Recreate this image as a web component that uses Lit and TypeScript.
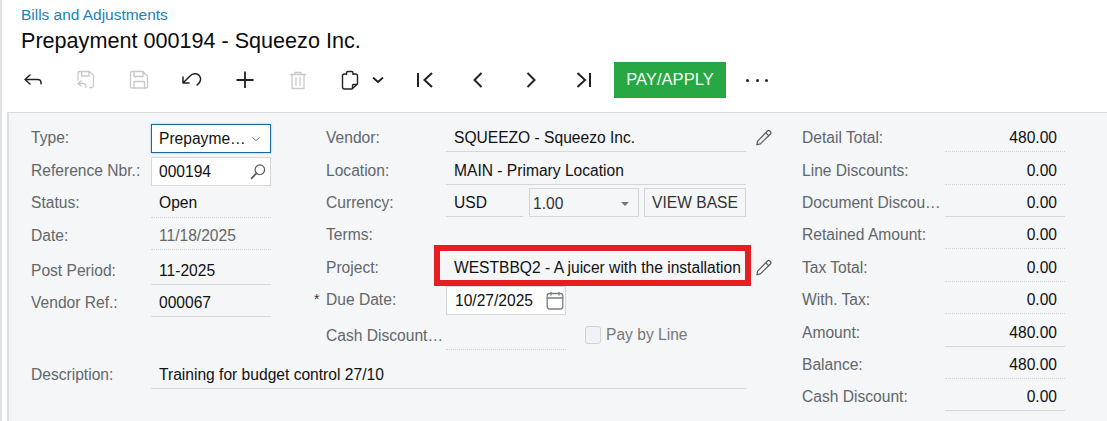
import { LitElement, html, css, svg } from "lit";
import { customElement } from "lit/decorators.js";

const ic = (body: unknown, cls = "") => html`<svg class="ic ${cls}" viewBox="0 0 24 24" width="24" height="24" fill="none" stroke="currentColor" stroke-width="1.3" stroke-linecap="round" stroke-linejoin="round">${body}</svg>`;

const icons = {
  back: svg`<path d="M4 11.5h12.5c2.2 0 3.5 1.3 3.5 3.2v1M4 11.5l5-4.5M4 11.5l5 4.5" stroke-width="1.5"/>`,
  saveBack: svg`<path d="M4 12V5a1.500 1.500 0 0 1 1.500-1.500H15.500L19.500 7.500V18a1.500 1.500 0 0 1-1.500 1.500H15.500M7.500 3.500V8H15V3.500"/><path d="M4 15.500h5.500c1.500 0 2.500 1 2.500 4M4 15.500l3-2.500M4 15.500l3 2.500"/>`,
  save: svg`<path d="M5 3.500h11l4.500 4.500V18.500a1.500 1.500 0 0 1-1.500 1.500H5a1.500 1.500 0 0 1-1.500-1.500V5A1.500 1.500 0 0 1 5 3.500zM7 3.500V8.500h9V3.500M7 20V13.500h10.500V20"/>`,
  undo: svg`<path d="M3 15l7-7C13 4.500 19 5 20.500 10c.5 3-1.500 5.500-3.500 7M3 9v6h6" stroke-width="1.500"/>`,
  plus: svg`<path d="M12 3.500v16.500M3.500 12h17" stroke-width="1.800" stroke-linecap="butt"/>`,
  trash: svg`<path d="M4.500 6.500h15M9 6.500V4.500h6v2M6 6.500V20.500h12V6.500M10 9.500v8M14 9.500v8"/>`,
  paste: svg`<path d="M8.500 6H6.500a2 2 0 0 0-2 2V19a2 2 0 0 0 2 2H14L19.500 16V8a2 2 0 0 0-2-2H15M8.500 6.500V5A1.500 1.500 0 0 1 10 3.500H13.500A1.500 1.500 0 0 1 15 5V6.500M14.500 20.500V17.500a1 1 0 0 1 1-1H19" stroke-width="1.400"/>`,
  chev: svg`<path d="M7.500 10l4.500 4 4.500-4" stroke-width="1.800"/>`,
  chevSm: svg`<path d="M7 10l5 4.500L17 10" stroke-width="1.500"/>`,
  first: svg`<path d="M5 5v14M19 5l-7.500 7 7.500 7" stroke-width="2" stroke-linecap="butt" stroke-linejoin="miter"/>`,
  prev: svg`<path d="M15.500 5l-7 7 7 7" stroke-width="2" stroke-linecap="butt" stroke-linejoin="miter"/>`,
  next: svg`<path d="M8.500 5l7 7-7 7" stroke-width="2" stroke-linecap="butt" stroke-linejoin="miter"/>`,
  last: svg`<path d="M18 5v14M5.500 5l7.500 7-7.500 7" stroke-width="2" stroke-linecap="butt" stroke-linejoin="miter"/>`,
  pencil: svg`<path d="M5 16.500L15.800 5.500a1.700 1.700 0 0 1 2.400 0l.8.8a1.700 1.700 0 0 1 0 2.400L8 19.500l-3.800 1zM14 7.500l3 3"/>`,
  search: svg`<circle cx="14" cy="9.500" r="5.200"/><path d="M10.200 13.500L5 19" stroke-width="1.800"/>`,
  cal: svg`<rect x="4.200" y="4.500" width="15.600" height="15.500" rx="2.500"/><path d="M4.200 9h15.600M8 3.500v2.500M16 3.500v2.500"/>`,
};

type Row = { l: string; v?: string; h: number; k?: string };

const col3: Row[] = [
  { l: "Detail Total:", v: "480.00", h: 30, k: "dot" },
  { l: "Line Discounts:", v: "0.00", h: 33, k: "dot" },
  { l: "Document Discou…", v: "0.00", h: 32, k: "solid" },
  { l: "Retained Amount:", v: "0.00", h: 32, k: "dot" },
  { l: "Tax Total:", v: "0.00", h: 33, k: "dot" },
  { l: "With. Tax:", v: "0.00", h: 32, k: "dot" },
  { l: "Amount:", v: "480.00", h: 33, k: "solid" },
  { l: "Balance:", v: "480.00", h: 32, k: "dot" },
  { l: "Cash Discount:", v: "0.00", h: 32, k: "solid" },
];

@customElement("app-root")
export class AppRoot extends LitElement {
  static styles = css`
    :host { display: block; width: 1107px; height: 421px; overflow: hidden; background: #fff; border-left: 2px solid #dfe1e3; box-sizing: border-box; font: 15.6px "Liberation Sans", Arial, sans-serif; color: #111; }
    .head { padding: 5px 0 0 19px; height: 55px; box-sizing: border-box; }
    .crumb { color: #1c7fbb; font-size: 15.45px; line-height: 19px; }
    .title { font-size: 21.6px; line-height: 26px; margin-top: 4px; color: #0b0b0b; }
    .bar { display: flex; align-items: center; height: 36px; margin-top: 7px; padding-left: 4px; color: #222; }
    .tb { width: 53px; height: 36px; display: flex; align-items: center; justify-content: center; flex: none; }
    .off { color: #c6cacd; }
    .group { display: flex; align-items: center; width: 74px; padding-left: 6px; box-sizing: border-box; flex: none; }
    .group .tb { width: 40px; }
    .group .chev { margin: 0 -4px; flex: none; }
    .pay { margin-left: 4px; width: 112px; height: 36px; background: #28a745; color: #f4fff6; display: flex; align-items: center; justify-content: center; font-size: 16.6px; flex: none; }
    .dots { margin-left: 20px; display: flex; gap: 6.5px; }
    .dots i { width: 3px; height: 3px; border-radius: 50%; background: #222; }
    .panel { margin: 14px 0 0 5px; background: #f4f6f8; border-top: 1px solid #d6dadd; border-left: 2px solid #dcdfe2; height: 320px; padding: 9px 0 0 22px; display: flex; box-sizing: border-box; }
    .left { width: 771px; flex: none; }
    .cols { display: flex; }
    .col { display: flex; flex-direction: column; flex: none; }
    .c1 { width: 295px; }
    .row { display: flex; align-items: flex-end; flex: none; position: relative; }
    .lab { height: 30px; line-height: 31px; color: #62676a; flex: none; white-space: nowrap; box-sizing: border-box; }
    .w120 { width: 120px; }
    .w143 { width: 143px; }
    .cell { height: 30px; line-height: 31px; padding: 0 8px; box-sizing: border-box; white-space: nowrap; flex: none; position: relative; }
    .up .lab, .up .cell { line-height: 29px; }
    .cw120 { width: 120px; }
    .cw300 { width: 300px; }
    .cw77 { width: 77px; }
    .cw595 { width: 595px; }
    .solid { border-bottom: 1px solid #d3d7da; }
    .dot { border-bottom: 1px dotted #cdd1d4; }
    .right { text-align: right; }
    .gray { color: #666; }
    .box { height: 29px; line-height: 27px; background: #fff; border: 1px solid #d3d7da; padding: 0 7px; display: flex; align-items: center; justify-content: space-between; gap: 2px; }
    .box .txt { white-space: nowrap; min-width: 0; }
    .due { padding-left: 8px; }
    .focus { border-color: #17699f; box-shadow: 0 0 2px rgba(23,105,159,.4); }
    .small { width: 110px; margin-left: 6px; background: transparent; color: #333; padding: 2px 7px 0 3px; }
    .tri { width: 0; height: 0; border: 4px solid transparent; border-top: 4.500px solid #777; border-bottom: 0; margin-right: 2px; flex: none; }
    .vbtn { width: 102px; height: 29px; margin-left: 5px; padding-top: 1px; border: 1px solid #d3d7da; box-sizing: border-box; display: flex; align-items: center; justify-content: center; color: #333; flex: none; }
    .pen { width: 22px; height: 22px; margin: 0 0 4px 7px; color: #55595c; flex: none; }
    .tiny { width: 16px; height: 16px; color: #777; flex: none; margin-right: -1px; }
    .si { width: 22px; height: 22px; color: #555; flex: none; margin-right: -6px; }
    .cali { width: 24px; height: 24px; color: #7a7e81; flex: none; margin-right: -9px; }
    .h30 { height: 30px; } .h31 { height: 31px; } .h32 { height: 32px; } .h33 { height: 33px; } .h35 { height: 35px; } .h39 { height: 39px; }
    .hl { position: absolute; left: -12px; right: -5px; top: -7px; bottom: -4px; border: 6px solid #e31e24; box-sizing: border-box; pointer-events: none; }
    .req { position: absolute; left: -12px; top: 9px; line-height: 16px; color: #333; font-size: 14px; }
    .chk { display: flex; align-items: center; gap: 5px; margin-left: 19px; height: 30px; color: #777; white-space: nowrap; flex: none; }
    .chk i { width: 14px; height: 16px; border: 1px solid #d0d3d6; border-radius: 3px; background: #f1f2f3; display: block; }
  `;

  private tb(icon: unknown, off = false) {
    return html`<div class="tb ${off ? "off" : ""}">${ic(icon)}</div>`;
  }

  render() {
    return html`
      <div class="head">
        <div class="crumb">Bills and Adjustments</div>
        <div class="title">Prepayment 000194 - Squeezo Inc.</div>
      </div>
      <div class="bar">
        ${this.tb(icons.back)}${this.tb(icons.saveBack, true)}${this.tb(icons.save, true)}${this.tb(icons.undo)}${this.tb(icons.plus)}${this.tb(icons.trash, true)}
        <div class="group">${this.tb(icons.paste)}${ic(icons.chev, "chev")}</div>
        ${this.tb(icons.first)}${this.tb(icons.prev)}${this.tb(icons.next)}${this.tb(icons.last)}
        <div class="pay">PAY/APPLY</div>
        <div class="dots"><i></i><i></i><i></i></div>
      </div>
      <div class="panel">
        <div class="left">
          <div class="cols">
            <div class="col c1">
              <div class="row h31 up"><div class="lab w120">Type:</div><div class="cell cw120 box focus"><span class="txt">Prepayme…</span>${ic(icons.chevSm, "tiny")}</div></div>
              <div class="row h33 up"><div class="lab w120">Reference Nbr.:</div><div class="cell cw120 box"><span class="txt">000194</span>${ic(icons.search, "si")}</div></div>
              <div class="row h32 up"><div class="lab w120">Status:</div><div class="cell cw120 dot">Open</div></div>
              <div class="row h32"><div class="lab w120">Date:</div><div class="cell cw120 dot gray">11/18/2025</div></div>
              <div class="row h35"><div class="lab w120">Post Period:</div><div class="cell cw120 solid">11-2025</div></div>
              <div class="row h32"><div class="lab w120">Vendor Ref.:</div><div class="cell cw120 solid">000067</div></div>
            </div>
            <div class="col">
              <div class="row h30"><div class="lab w120">Vendor:</div><div class="cell cw300 solid">SQUEEZO - Squeezo Inc.</div>${ic(icons.pencil, "pen")}</div>
              <div class="row h33"><div class="lab w120">Location:</div><div class="cell cw300 solid">MAIN - Primary Location</div></div>
              <div class="row h32"><div class="lab w120">Currency:</div><div class="cell cw77 solid">USD</div><div class="cell box small"><span class="txt">1.00</span><span class="tri"></span></div><div class="vbtn">VIEW BASE</div></div>
              <div class="row h32"><div class="lab w120">Terms:</div></div>
              <div class="row h33"><div class="lab w120">Project:</div><div class="cell cw300">WESTBBQ2 - A juicer with the installation<div class="hl"></div></div>${ic(icons.pencil, "pen")}</div>
              <div class="row h33 up"><span class="req">*</span><div class="lab w120">Due Date:</div><div class="cell cw120 box due"><span class="txt">10/27/2025</span>${ic(icons.cal, "cali")}</div></div>
              <div class="row h35"><div class="lab w120">Cash Discount…</div><div class="cell cw120 dot"></div><div class="chk"><i></i>Pay by Line</div></div>
            </div>
          </div>
          <div class="row h39"><div class="lab w120">Description:</div><div class="cell cw595 solid">Training for budget control 27/10</div></div>
        </div>
        <div class="col">
          ${col3.map((r) => html`<div class="row h${r.h}"><div class="lab w143">${r.l}</div><div class="cell cw120 right ${r.k}">${r.v}</div></div>`)}
        </div>
      </div>
    `;
  }
}
